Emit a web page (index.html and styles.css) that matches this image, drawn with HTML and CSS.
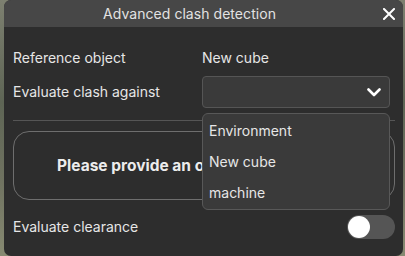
FILE: index.html
```html
<!DOCTYPE html>
<html>
<head>
<meta charset="utf-8">
<link rel="stylesheet" href="styles.css">
</head>
<body>
<div class="backdrop">
  <div class="dialog">
    <div class="header">
      <span class="title">Advanced clash detection</span>
      <span class="close">
        <svg width="12" height="12" viewBox="0 0 12 12"><path d="M1 1L11 11M11 1L1 11" stroke="#fff" stroke-width="2" stroke-linecap="square"/></svg>
      </span>
    </div>
    <div class="body">
      <div class="row">
        <span class="label">Reference object</span>
        <span class="value">New cube</span>
      </div>
      <div class="row row-select">
        <span class="label">Evaluate clash against</span>
        <div class="select-wrap">
          <div class="select">
            <svg width="14" height="9" viewBox="0 0 14 9"><path d="M1.5 1.5L7 7L12.5 1.5" stroke="#fff" stroke-width="2.6" fill="none" stroke-linecap="round" stroke-linejoin="round"/></svg>
          </div>
          <ul class="menu">
            <li>Environment</li>
            <li>New cube</li>
            <li>machine</li>
          </ul>
        </div>
      </div>
      <div class="divider"></div>
      <div class="card">Please provide an object to evaluate.</div>
      <div class="row row-toggle">
        <span class="label">Evaluate clearance</span>
        <span class="toggle"><span class="knob"></span></span>
      </div>
    </div>
  </div>
</div>
</body>
</html>
```
FILE: styles.css
```css
* { box-sizing: border-box; }
html, body { margin: 0; padding: 0; }
body {
  width: 405px;
  height: 256px;
  overflow: hidden;
  font-family: Inter, "Noto Sans", sans-serif;
  font-size: 14px;
  color: #e6e6e6;
  background: linear-gradient(180deg, #7d8070 0%, #5e6555 40%, #6f7260 70%, #878a72 100%);
}
.backdrop {
  display: flex;
  height: 256px;
  padding-left: 4px;
}
.dialog {
  width: 399px;
  height: 256px;
  background: #2d2d2d;
  border-radius: 7px;
  display: flex;
  flex-direction: column;
}
.header {
  height: 27px;
  background: #474747;
  border-radius: 7px 7px 0 0;
  display: flex;
  align-items: center;
  padding: 0 8px 0 30px;
}
.title {
  flex: 1;
  text-align: center;
  padding-right: 50px;
  color: #e2e2e2;
  font-size: 14px;
  letter-spacing: 0.05px;
}
.close {
  display: flex;
  margin-top: 1px;
  margin-left: -12px;
}
.body {
  padding: 20px 8px 0 9px;
  display: flex;
  flex-direction: column;
}
.row {
  display: grid;
  grid-template-columns: 189px 188px;
  align-items: center;
}
.row .label, .row .value { line-height: 22px; }
.row-select { margin-top: 7px; }
.select-wrap { position: relative; }
.select {
  height: 32px;
  background: #3a3a3a;
  border: 1px solid #555;
  border-radius: 4px;
  display: flex;
  align-items: center;
  justify-content: flex-end;
  padding-right: 8px;
}
.menu {
  position: absolute;
  left: 0;
  top: 37px;
  width: 188px;
  margin: 0;
  padding: 1px 0;
  list-style: none;
  background: #3a3a3a;
  border: 1px solid #585858;
  border-radius: 6px;
  z-index: 5;
}
.menu li {
  height: 31px;
  line-height: 31px;
  padding-left: 6px;
  color: #e6e6e6;
}
.divider {
  margin-top: 12px;
  height: 1px;
  background: #555;
}
.card {
  margin-top: 10px;
  height: 69px;
  border: 1px solid #6e6e6e;
  border-radius: 16px;
  display: flex;
  align-items: center;
  padding-left: 43px;
  white-space: nowrap;
  overflow: hidden;
  font-weight: 700;
  font-size: 15.5px;
  color: #ececec;
}
.row-toggle {
  margin-top: 15px;
  grid-template-columns: 1fr auto;
}
.toggle {
  width: 48px;
  height: 24px;
  border-radius: 12px;
  background: #555;
  display: flex;
  align-items: center;
  padding-left: 1px;
}
.knob {
  width: 22px;
  height: 22px;
  border-radius: 50%;
  background: #fff;
}
```
